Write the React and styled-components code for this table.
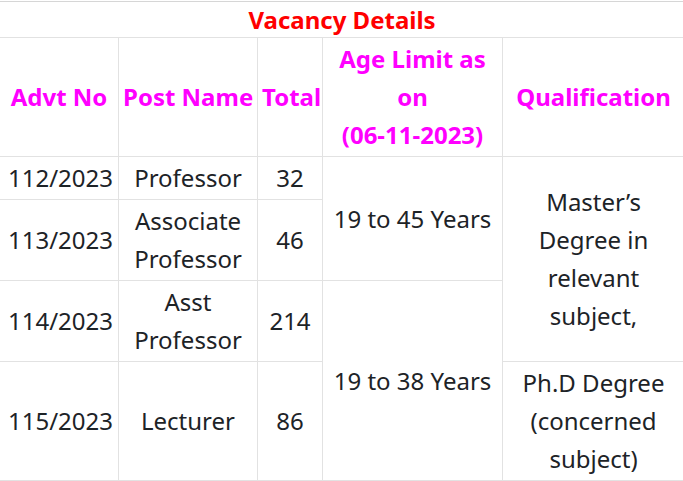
import React from "react";
import styled, { createGlobalStyle } from "styled-components";

const Global = createGlobalStyle`
  html, body { margin: 0; padding: 0; background: #fff; }
  body { font-family: "Noto Sans", "Open Sans", sans-serif; color: #1d2327; }
`;

const Frame = styled.div`
  width: 683px;
  overflow: hidden;
  padding-top: 1px;
`;

const Table = styled.table`
  width: 685px;
  margin-left: -1px;
  border-collapse: collapse;
  table-layout: fixed;
  font-size: 24px;
  line-height: 38px;
`;

const Cell = styled.td`
  border: 1px solid #e2e2e2;
  padding: 2px 8px;
  text-align: center;
  vertical-align: middle;
`;

const Title = styled.th`
  border: 1px solid #d6d6d6;
  border-bottom-color: #e2e2e2;
  padding: 0;
  height: 35px;
  line-height: 30px;
  color: #ff0000;
  font-weight: 700;
  text-align: center;
`;

const Head = styled.th`
  border: 1px solid #e2e2e2;
  padding: 2px 4px;
  color: #ff00ff;
  font-weight: 700;
  text-align: center;
  vertical-align: middle;
  white-space: ${(p) => (p.$nowrap ? "nowrap" : "normal")};
`;

const NoBreak = styled.span`
  white-space: nowrap;
`;

const cols = [119, 139, 65, 180, 182];

export default function App() {
  return (
    <>
      <Global />
      <Frame>
        <Table>
          <colgroup>
            {cols.map((w, i) => (
              <col key={i} style={{ width: w }} />
            ))}
          </colgroup>
          <thead>
            <tr>
              <Title colSpan={5}>Vacancy Details</Title>
            </tr>
            <tr>
              <Head $nowrap>Advt No</Head>
              <Head $nowrap>Post Name</Head>
              <Head $nowrap>Total</Head>
              <Head>
                Age Limit as on <NoBreak>(06-11-2023)</NoBreak>
              </Head>
              <Head $nowrap>Qualification</Head>
            </tr>
          </thead>
          <tbody>
            <tr>
              <Cell>112/2023</Cell>
              <Cell>Professor</Cell>
              <Cell>32</Cell>
              <Cell rowSpan={2}>19 to 45 Years</Cell>
              <Cell rowSpan={3}>Master’s Degree in relevant subject,</Cell>
            </tr>
            <tr>
              <Cell>113/2023</Cell>
              <Cell>Associate Professor</Cell>
              <Cell>46</Cell>
            </tr>
            <tr>
              <Cell>114/2023</Cell>
              <Cell>Asst Professor</Cell>
              <Cell>214</Cell>
              <Cell rowSpan={2}>19 to 38 Years</Cell>
            </tr>
            <tr>
              <Cell>115/2023</Cell>
              <Cell>Lecturer</Cell>
              <Cell>86</Cell>
              <Cell>Ph.D Degree (concerned subject)</Cell>
            </tr>
          </tbody>
        </Table>
      </Frame>
    </>
  );
}
